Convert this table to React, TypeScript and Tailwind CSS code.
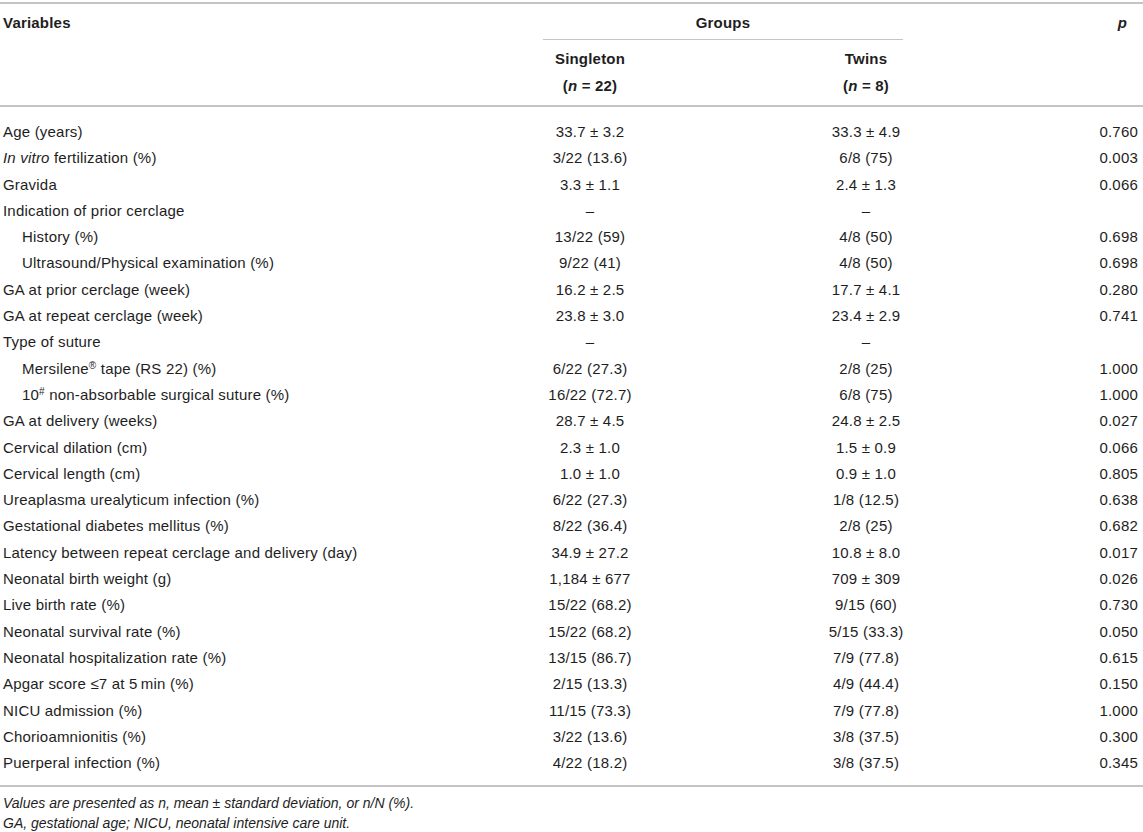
import type { ReactNode } from "react";

type Row = { label: ReactNode; a: string; b: string; p: string; sub?: boolean };

const rows: Row[] = [
  { label: "Age (years)", a: "33.7 ± 3.2", b: "33.3 ± 4.9", p: "0.760" },
  { label: <><i>In vitro</i> fertilization (%)</>, a: "3/22 (13.6)", b: "6/8 (75)", p: "0.003" },
  { label: "Gravida", a: "3.3 ± 1.1", b: "2.4 ± 1.3", p: "0.066" },
  { label: "Indication of prior cerclage", a: "–", b: "–", p: "" },
  { label: "History (%)", a: "13/22 (59)", b: "4/8 (50)", p: "0.698", sub: true },
  { label: "Ultrasound/Physical examination (%)", a: "9/22 (41)", b: "4/8 (50)", p: "0.698", sub: true },
  { label: "GA at prior cerclage (week)", a: "16.2 ± 2.5", b: "17.7 ± 4.1", p: "0.280" },
  { label: "GA at repeat cerclage (week)", a: "23.8 ± 3.0", b: "23.4 ± 2.9", p: "0.741" },
  { label: "Type of suture", a: "–", b: "–", p: "" },
  {
    label: <>Mersilene<sup className="text-[10px]">®</sup> tape (RS 22) (%)</>,
    a: "6/22 (27.3)", b: "2/8 (25)", p: "1.000", sub: true,
  },
  {
    label: <>10<sup className="text-[10px]">#</sup> non-absorbable surgical suture (%)</>,
    a: "16/22 (72.7)", b: "6/8 (75)", p: "1.000", sub: true,
  },
  { label: "GA at delivery (weeks)", a: "28.7 ± 4.5", b: "24.8 ± 2.5", p: "0.027" },
  { label: "Cervical dilation (cm)", a: "2.3 ± 1.0", b: "1.5 ± 0.9", p: "0.066" },
  { label: "Cervical length (cm)", a: "1.0 ± 1.0", b: "0.9 ± 1.0", p: "0.805" },
  { label: "Ureaplasma urealyticum infection (%)", a: "6/22 (27.3)", b: "1/8 (12.5)", p: "0.638" },
  { label: "Gestational diabetes mellitus (%)", a: "8/22 (36.4)", b: "2/8 (25)", p: "0.682" },
  { label: "Latency between repeat cerclage and delivery (day)", a: "34.9 ± 27.2", b: "10.8 ± 8.0", p: "0.017" },
  { label: "Neonatal birth weight (g)", a: "1,184 ± 677", b: "709 ± 309", p: "0.026" },
  { label: "Live birth rate (%)", a: "15/22 (68.2)", b: "9/15 (60)", p: "0.730" },
  { label: "Neonatal survival rate (%)", a: "15/22 (68.2)", b: "5/15 (33.3)", p: "0.050" },
  { label: "Neonatal hospitalization rate (%)", a: "13/15 (86.7)", b: "7/9 (77.8)", p: "0.615" },
  { label: "Apgar score ≤7 at 5\u2009min (%)", a: "2/15 (13.3)", b: "4/9 (44.4)", p: "0.150" },
  { label: "NICU admission (%)", a: "11/15 (73.3)", b: "7/9 (77.8)", p: "1.000" },
  { label: "Chorioamnionitis (%)", a: "3/22 (13.6)", b: "3/8 (37.5)", p: "0.300" },
  { label: "Puerperal infection (%)", a: "4/22 (18.2)", b: "3/8 (37.5)", p: "0.345" },
];

const cols = "grid grid-cols-[457px_266px_286px_1fr]";

const App = () => {
  return (
    <div className="w-[1143px] h-[832px] bg-white text-[#1e1e1e] text-[15px] tracking-[0.2px] font-['Liberation_Sans',Arial,sans-serif] pt-[2px]">
      <div className="border-t-2 border-b-2 border-[#c4c4c4]">
        {/* header */}
        <div className={`${cols} border-b-2 border-[#c4c4c4] font-bold leading-[20px]`}>
          <div className="row-span-2 pl-[3px] pt-[9px]">Variables</div>
          <div className="col-span-2">
            <div className="h-[36px] pt-[9px] ml-[86px] mr-[106px] border-b border-[#c4c4c4] text-center">Groups</div>
          </div>
          <div className="row-span-2 pt-[9px] pr-[16px] text-right italic">p</div>
          <div className="text-center leading-[27px] pt-[5px] pb-[6px]">
            <div>Singleton</div>
            <div>(<i>n</i> = 22)</div>
          </div>
          <div className="text-center leading-[27px] pt-[5px] pb-[6px]">
            <div>Twins</div>
            <div>(<i>n</i> = 8)</div>
          </div>
        </div>

        {/* body */}
        <div className="pt-[12px] pb-[9px]">
          {rows.map((r, i) => (
            <div key={i} className={`${cols} h-[26.3px] leading-[26.3px]`}>
              <div className={`whitespace-nowrap ${r.sub ? "pl-[22px]" : "pl-[3px]"}`}>{r.label}</div>
              <div className="text-center">{r.a}</div>
              <div className="text-center">{r.b}</div>
              <div className="text-right pr-[5px]">{r.p}</div>
            </div>
          ))}
        </div>
      </div>

      <div className="pl-[3px] pt-[6px] text-[14px] tracking-normal leading-[20px] italic">
        <div>Values are presented as n, mean ± standard deviation, or n/N (%).</div>
        <div>GA, gestational age; NICU, neonatal intensive care unit.</div>
      </div>
    </div>
  );
};

export default App;
